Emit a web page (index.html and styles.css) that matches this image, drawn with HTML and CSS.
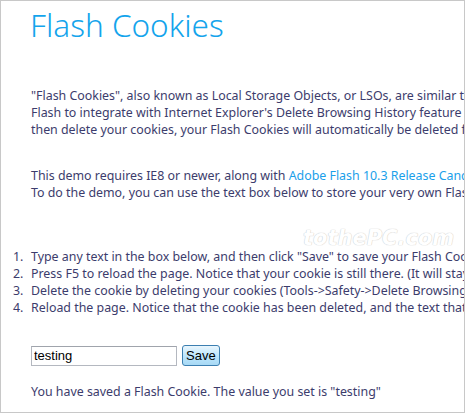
FILE: index.html
```html
<!DOCTYPE html>
<html lang="en">
<head>
    <meta charset="UTF-8">
    <title>Flash Cookies</title>
    <link rel="stylesheet" href="styles.css">
</head>
<body>
    <div id="page">
        <h1 class="title">Flash Cookies</h1>
        <p class="intro">
            "Flash Cookies", also known as Local Storage Objects, or LSOs, are similar to HTTP cookies.<br>
            Flash to integrate with Internet Explorer's Delete Browsing History feature so that<br>
            then delete your cookies, your Flash Cookies will automatically be deleted from your computer.
        </p>
        <p class="demo">
            This demo requires IE8 or newer, along with <a href="#">Adobe Flash 10.3 Release Candidate</a>.<br>
            To do the demo, you can use the text box below to store your very own Flash Cookie.
        </p>
        <ol class="steps">
            <li>Type any text in the box below, and then click "Save" to save your Flash Cookie.</li>
            <li>Press F5 to reload the page. Notice that your cookie is still there. (It will stay)</li>
            <li>Delete the cookie by deleting your cookies (Tools-&gt;Safety-&gt;Delete Browsing History)</li>
            <li>Reload the page. Notice that the cookie has been deleted, and the text that you saved.</li>
        </ol>
        <div class="form">
            <input type="text" value="testing">
            <button>Save</button>
        </div>
        <p class="result">You have saved a Flash Cookie. The value you set is "testing"</p>
        <span class="mark">tothePC.com</span>
    </div>
</body>
</html>
```

FILE: styles.css
```css
*{
    margin: 0;
    padding: 0;
    box-sizing: border-box;
}
body{
    width: 465px;
    height: 413px;
    overflow: hidden;
}
#page{
    position: relative;
    width: 465px;
    height: 413px;
    border: 1px solid #c8c8c8;
    overflow: hidden;
    padding: 0 0 0 30px;
    font-family: "Noto Sans", sans-serif;
    font-size: 12.4px;
    line-height: 17px;
    color: #3c3c6c;
    white-space: nowrap;
    background: #fff;
}
.title{
    font-weight: 300;
    font-size: 31.5px;
    line-height: 36px;
    color: #14a4ec;
    margin: 6px 0 0 -1px;
}
.intro{
    margin-top: 44px;
}
.demo{
    margin-top: 29px;
}
.demo a{
    color: #1aa0ea;
    text-decoration: none;
}
.steps{
    margin-top: 47px;
    margin-left: -18px;
    list-style: none;
    counter-reset: step;
}
.steps li{
    counter-increment: step;
}
.steps li::before{
    content: counter(step) ".";
    display: inline-block;
    width: 18px;
}
.form{
    display: flex;
    align-items: center;
    gap: 5px;
    margin-top: 29px;
}
.form input{
    width: 146px;
    height: 20px;
    border: 1px solid #b4b8c0;
    border-top-color: #a0a4ac;
    font-family: "Liberation Sans", Arial, sans-serif;
    font-size: 13px;
    color: #000;
    padding: 0 2px;
    outline: none;
}
.form button{
    height: 21px;
    padding: 0 3px;
    font-family: "Liberation Sans", Arial, sans-serif;
    font-size: 13px;
    color: #000;
    border: 1px solid #3c7fb1;
    border-radius: 3px;
    background: linear-gradient(#eaf6fd, #bee6fd 50%, #a7d9f5);
}
.result{
    margin-top: 17px;
}
.mark{
    position: absolute;
    left: 302px;
    top: 227px;
    font-family: "DejaVu Sans", sans-serif;
    font-weight: bold;
    font-style: italic;
    font-size: 21px;
    line-height: 20px;
    color: #ffffff;
    text-shadow: 0 0 1px #cccccc, 0 0 1px #cccccc;
}
```
